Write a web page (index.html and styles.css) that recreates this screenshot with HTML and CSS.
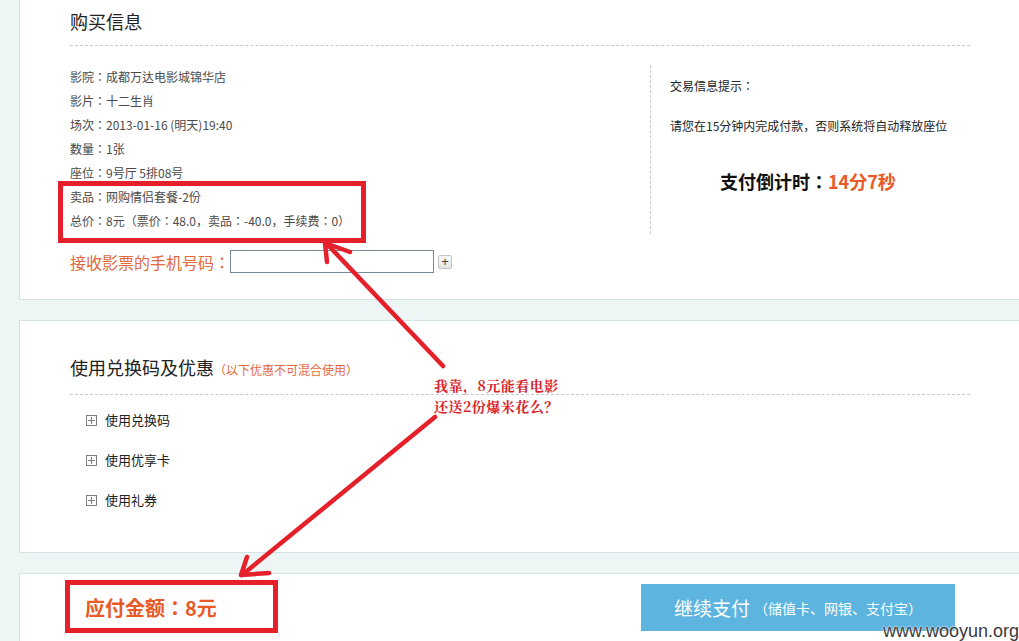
FILE: index.html
```html
<!DOCTYPE html>
<html lang="zh-CN">
<head>
<meta charset="utf-8">
<title>购买信息</title>
<link rel="stylesheet" href="styles.css">
</head>
<body>
<div class="page">
  <section class="panel panel-buy">
    <h2 class="panel-title">购买信息</h2>
    <div class="buy-body">
      <div class="buy-left">
        <ul class="info-list">
          <li>影院：成都万达电影城锦华店</li>
          <li>影片：十二生肖</li>
          <li>场次：2013-01-16 (明天)19:40</li>
          <li>数量：1张</li>
          <li>座位：9号厅 5排08号</li>
          <li>卖品：网购情侣套餐-2份</li>
          <li>总价：8元（票价：48.0，卖品：-40.0，手续费：0）</li>
        </ul>
      </div>
      <div class="buy-right">
        <p class="tip-title">交易信息提示：</p>
        <p class="tip-text">请您在15分钟内完成付款，否则系统将自动释放座位</p>
        <p class="countdown">支付倒计时：<span class="orange">14分7秒</span></p>
      </div>
    </div>
    <div class="phone-row">
      <label class="phone-label">接收影票的手机号码：</label>
      <span class="phone-input"></span>
      <span class="phone-add">+</span>
    </div>
  </section>

  <section class="panel panel-coupon">
    <h2 class="panel-title">使用兑换码及优惠<span class="title-note">（以下优惠不可混合使用）</span></h2>
    <ul class="coupon-list">
      <li><span class="plus-box"></span>使用兑换码</li>
      <li><span class="plus-box"></span>使用优享卡</li>
      <li><span class="plus-box"></span>使用礼券</li>
    </ul>
  </section>

  <section class="panel panel-pay">
    <div class="pay-amount">应付金额：8元</div>
    <div class="pay-btn"><span class="pay-main">继续支付</span><span class="pay-sub">（储值卡、网银、支付宝）</span></div>
  </section>
</div>

<div class="mark-box mark-box-1"></div>
<div class="mark-box mark-box-2"></div>
<svg class="arrows" width="1019" height="641" viewBox="0 0 1019 641">
  <g fill="none" stroke="#e5202a" stroke-width="4.5" stroke-linecap="round" stroke-linejoin="round">
    <path d="M443 366 L326 243"/>
    <path d="M327 262 L325 243 L350 252"/>
    <path d="M435 417 L242 575"/>
    <path d="M247 557 L241 575 L269 573"/>
  </g>
</svg>
<div class="note">我靠，8元能看电影<br>还送2份爆米花么？</div>
<div class="watermark">www.wooyun.org</div>
</body>
</html>
```

FILE: styles.css
```css
* { box-sizing: border-box; }
html, body { margin: 0; padding: 0; }
body {
  width: 1019px;
  height: 641px;
  overflow: hidden;
  position: relative;
  background: #eef5f5;
  font-family: "Noto Sans CJK JP", "Noto Sans CJK SC", "Liberation Sans", sans-serif;
  font-feature-settings: "locl" 0;
  color: #333;
}
ul { list-style: none; margin: 0; padding: 0; }
p, h2 { margin: 0; }

.page {
  padding-left: 19px;
  width: 1060px;
  display: flex;
  flex-direction: column;
  gap: 20px;
}
.panel {
  background: #fff;
  border: 1px solid #d3e2e2;
  border-right: none;
}
.panel-buy {
  border-top: none;
  padding: 6px 0 26px 50px;
}
.panel-title {
  font-size: 18px;
  font-weight: normal;
  line-height: 30px;
  color: #222;
  width: 900px;
  padding-bottom: 9px;
  border-bottom: 1px dashed #c8c8c8;
}
.title-note {
  font-size: 12px;
  color: #e2693c;
}
.buy-body {
  display: flex;
  margin-top: 19px;
  width: 900px;
}
.buy-left { width: 580px; }
.info-list li {
  font-size: 12px;
  line-height: 24px;
  color: #4a4a4a;
}
.buy-right {
  border-left: 1px dashed #c8c8c8;
  padding: 9px 0 0 19px;
  height: 169px;
}
.tip-title, .tip-text {
  font-size: 12px;
  line-height: 24px;
  color: #222;
}
.tip-text { margin-top: 16px; }
.countdown {
  margin-top: 28px;
  padding-left: 50px;
  font-size: 18px;
  line-height: 30px;
  font-weight: bold;
  color: #111;
}
.orange { color: #e85a26; }

.phone-row {
  display: flex;
  align-items: center;
  margin-top: 16px;
  height: 23px;
}
.phone-label {
  font-size: 16px;
  color: #e2693c;
  width: 160px;
}
.phone-input {
  width: 204px;
  height: 23px;
  border: 1px solid #778a99;
  background: #fff;
}
.phone-add {
  margin-left: 4px;
  width: 14px;
  height: 14px;
  border: 1px solid #c4c4c4;
  border-radius: 2px;
  background: linear-gradient(#fafafa, #e4e4e4);
  font-family: "Liberation Sans", sans-serif;
  font-size: 13px;
  line-height: 11px;
  text-align: center;
  color: #444;
}

.panel-coupon {
  padding: 31px 0 42px 50px;
}
.coupon-list {
  margin-top: 15px;
  padding-left: 16px;
  display: flex;
  flex-direction: column;
  gap: 20px;
}
.coupon-list li {
  display: flex;
  align-items: center;
  font-size: 13px;
  line-height: 20px;
  color: #222;
}
.plus-box {
  position: relative;
  width: 11px;
  height: 11px;
  border: 1px solid #7d7d7d;
  margin-right: 8px;
}
.plus-box::before, .plus-box::after {
  content: "";
  position: absolute;
  background: #7d7d7d;
}
.plus-box::before { left: 1px; right: 1px; top: 4px; height: 1px; }
.plus-box::after { top: 1px; bottom: 1px; left: 4px; width: 1px; }

.panel-pay {
  border-bottom: none;
  display: flex;
  align-items: center;
  padding: 10px 0 30px 65px;
}
.pay-amount {
  width: 556px;
  font-size: 20px;
  font-weight: bold;
  color: #e85a26;
}
.pay-btn {
  width: 314px;
  height: 47px;
  background: #5cb4df;
  color: #fff;
  display: flex;
  align-items: center;
  justify-content: center;
}
.pay-main { font-size: 19px; }
.pay-sub { font-size: 14px; margin-left: 4px; }

.mark-box {
  position: absolute;
  border: 5px solid #e5202a;
}
.mark-box-1 { left: 58px; top: 181px; width: 308px; height: 62px; }
.mark-box-2 { left: 65px; top: 580px; width: 213px; height: 53px; }

.arrows {
  position: absolute;
  left: 0;
  top: 0;
}
.note {
  position: absolute;
  left: 434px;
  top: 375px;
  font-family: "Noto Serif CJK SC", "Noto Sans CJK SC", serif;
  font-size: 14px;
  font-weight: bold;
  line-height: 21px;
  color: #d9232a;
  letter-spacing: 0.5px;
}
.watermark {
  position: absolute;
  right: 0;
  bottom: 0;
  font-family: "Liberation Sans", sans-serif;
  font-size: 18px;
  line-height: 20px;
  color: #3a3a3a;
  text-shadow: 0 0 2px #fff, 0 0 2px #fff;
}
```
